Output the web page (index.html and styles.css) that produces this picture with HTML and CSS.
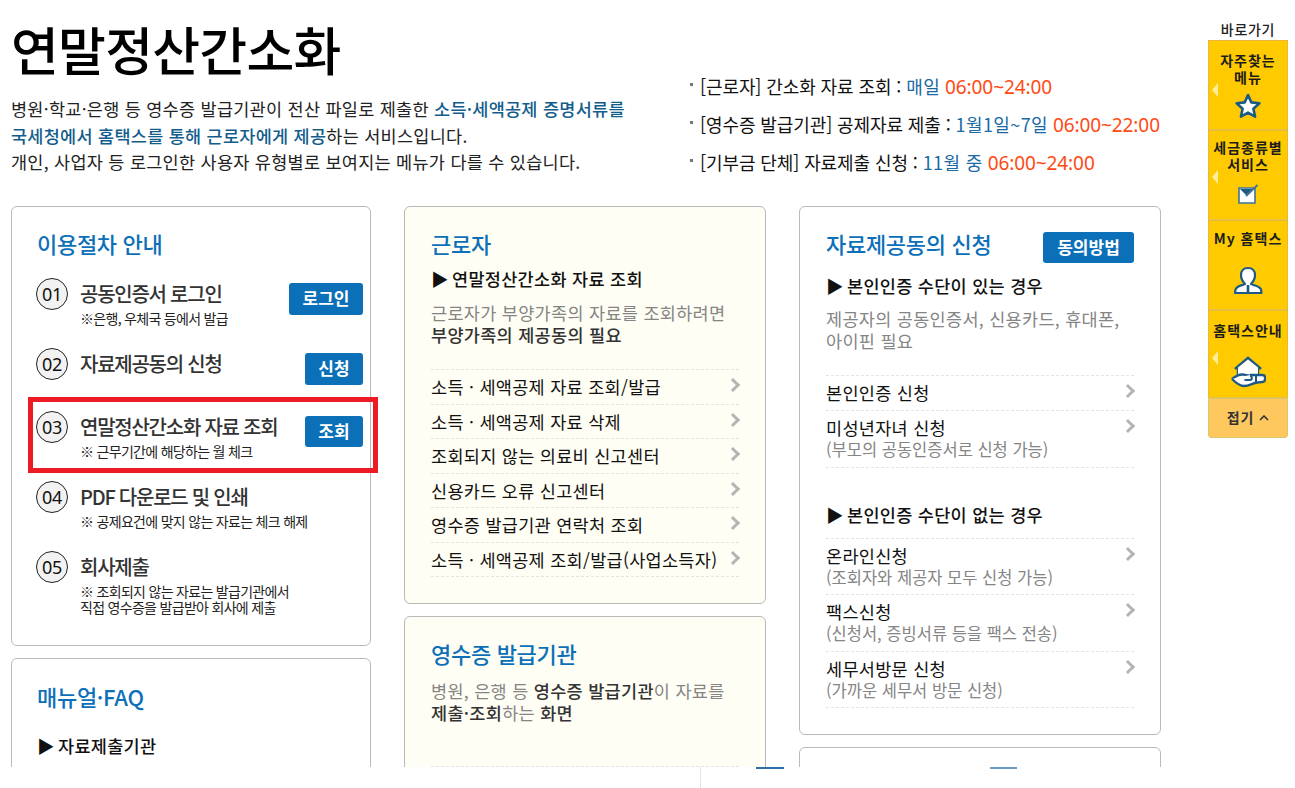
FILE: index.html
```html
<!DOCTYPE html>
<html lang="ko">
<head>
<meta charset="utf-8">
<title>연말정산간소화</title>
<link rel="stylesheet" href="styles.css">
</head>
<body>
<div class="page">
  <main class="main">
    <header class="head">
      <div class="intro">
        <h1>연말정산간소화</h1>
        <p>병원·학교·은행 등 영수증 발급기관이 전산 파일로 제출한 <b>소득·세액공제 증명서류를<br>국세청에서 홈택스를 통해 근로자에게 제공</b>하는 서비스입니다.<br>개인, 사업자 등 로그인한 사용자 유형별로 보여지는 메뉴가 다를 수 있습니다.</p>
      </div>
      <ul class="hours">
        <li>[근로자] 간소화 자료 조회 : <em>매일</em> <i>06:00~24:00</i></li>
        <li>[영수증 발급기관] 공제자료 제출 : <em>1월1일~7일</em> <i>06:00~22:00</i></li>
        <li>[기부금 단체] 자료제출 신청 : <em>11월 중</em> <i>06:00~24:00</i></li>
      </ul>
    </header>
    <div class="cols">
      <div class="col">
        <section class="card steps-card">
          <h2>이용절차 안내</h2>
          <div class="step s1"><span class="num">01</span><div class="txt"><strong>공동인증서 로그인</strong><small>※은행, 우체국 등에서 발급</small></div><a class="btn wide">로그인</a></div>
          <div class="step s2"><span class="num">02</span><div class="txt"><strong>자료제공동의 신청</strong></div><a class="btn">신청</a></div>
          <div class="step s3"><span class="num">03</span><div class="txt"><strong>연말정산간소화 자료 조회</strong><small>※ 근무기간에 해당하는 월 체크</small></div><a class="btn">조회</a></div>
          <div class="step s4"><span class="num">04</span><div class="txt"><strong>PDF 다운로드 및 인쇄</strong><small>※ 공제요건에 맞지 않는 자료는 체크 해제</small></div></div>
          <div class="step s5"><span class="num">05</span><div class="txt"><strong>회사제출</strong><small>※ 조회되지 않는 자료는 발급기관에서<br>직접 영수증을 발급받아 회사에 제출</small></div></div>
        </section>
        <section class="card faq">
          <h2>매뉴얼·FAQ</h2>
          <h3><span class="tri">▶</span> 자료제출기관</h3>
        </section>
      </div>
      <div class="col">
        <section class="card warm worker">
          <h2>근로자</h2>
          <h3><span class="tri">▶</span> 연말정산간소화 자료 조회</h3>
          <p class="desc">근로자가 부양가족의 자료를 조회하려면<br><b>부양가족의 제공동의 필요</b></p>
          <ul class="links">
            <li><a>소득 · 세액공제 자료 조회/발급</a></li>
            <li><a>소득 · 세액공제 자료 삭제</a></li>
            <li><a>조회되지 않는 의료비 신고센터</a></li>
            <li><a>신용카드 오류 신고센터</a></li>
            <li><a>영수증 발급기관 연락처 조회</a></li>
            <li><a>소득 · 세액공제 조회/발급(사업소득자)</a></li>
          </ul>
        </section>
        <section class="card warm issuer">
          <h2>영수증 발급기관</h2>
          <p class="desc">병원, 은행 등 <b>영수증 발급기관</b>이 자료를<br><b>제출·조회</b>하는 <b>화면</b></p>
          <div class="dash"></div>
        </section>
      </div>
      <div class="col">
        <section class="card consent">
          <div class="title-row"><h2>자료제공동의 신청</h2><a class="btn method">동의방법</a></div>
          <h3><span class="tri">▶</span> 본인인증 수단이 있는 경우</h3>
          <p class="desc">제공자의 공동인증서, 신용카드, 휴대폰,<br>아이핀 필요</p>
          <ul class="links tall first">
            <li><a>본인인증 신청</a></li>
            <li><a>미성년자녀 신청<small>(부모의 공동인증서로 신청 가능)</small></a></li>
          </ul>
          <h3 class="second"><span class="tri">▶</span> 본인인증 수단이 없는 경우</h3>
          <ul class="links tall">
            <li><a>온라인신청<small>(조회자와 제공자 모두 신청 가능)</small></a></li>
            <li><a>팩스신청<small>(신청서, 증빙서류 등을 팩스 전송)</small></a></li>
            <li><a>세무서방문 신청<small>(가까운 세무서 방문 신청)</small></a></li>
          </ul>
        </section>
        <section class="card last"></section>
      </div>
    </div>
  </main>
  <aside class="side">
    <div class="side-title">바로가기</div>
    <a class="qk q1"><span>자주찾는<br>메뉴</span>
      <svg width="28" height="28" viewBox="0 0 28 28"><path d="M14 3l3.300 7.400 8.100.9-6 5.400 1.700 8-7.100-4.100-7.100 4.100 1.700-8-6-5.400 8.100-.9z" fill="#fff" stroke="#1c5a85" stroke-width="2.600" stroke-linejoin="round"/></svg></a>
    <a class="qk q2"><span>세금종류별<br>서비스</span>
      <svg width="22" height="20" viewBox="0 0 22 20"><path d="M2 4h16v15H2z" fill="#fff" stroke="#3f7397" stroke-width="1.600"/><path d="M3 5h14l-7 7z" fill="#1c5a85"/><path d="M9 12L20.500 1" fill="none" stroke="#3f7397" stroke-width="1.800"/></svg></a>
    <a class="qk q3"><span>My 홈택스</span>
      <svg width="30" height="30" viewBox="0 0 30 30"><path d="M15 2c4.500 0 7 3 7 7s-3 8-4 9c3 1.500 9 2 10 5.500l.5 3.500H2l.5-3.500C3.500 20 9 19.500 12 18c-1-1-4-5-4-9s2.500-7 7-7z" fill="#fff" stroke="#1c5a85" stroke-width="2.200" stroke-linejoin="round"/><path d="M15 19v7" stroke="#1c5a85" stroke-width="2.600"/></svg></a>
    <a class="qk q4"><span>홈택스안내</span>
      <svg width="36" height="32" viewBox="0 0 36 32"><path d="M5 13L18 2l13 11" fill="none" stroke="#1c5a85" stroke-width="2.600"/><path d="M8 11.500V20M28 11.500V18" fill="none" stroke="#1c5a85" stroke-width="2.400"/><path d="M8 11.500L18 3.500l10 8V20H8z" fill="#fff"/><path d="M2 23c3-2.500 7-4.500 10.500-4.500 3 0 4 1 7 1 2.500 0 2.500 4 0 4H15" fill="#fff" stroke="#1c5a85" stroke-width="2.300" stroke-linejoin="round"/><path d="M2 23c3 3 7 7 12 7 5 0 9-3 13-3.500 2-.2 3-.5 5-.5 2.500 0 3-1.500 3-3v-1.500c0-2-1-2.500-3-2.500H20" fill="#fff" stroke="#1c5a85" stroke-width="2.300" stroke-linejoin="round"/><path d="M14.500 24H20c2.500 0 2.500-4 0-4M26 19v7" fill="none" stroke="#1c5a85" stroke-width="2"/></svg></a>
    <a class="fold">접기 <svg width="10" height="6" viewBox="0 0 10 6"><path d="M1 5l4-4 4 4" fill="none" stroke="#333" stroke-width="1.600"/></svg></a>
  </aside>
</div>
<footer class="foot"><span class="foot-line"></span><span class="foot-mark"></span><span class="foot-mark light"></span></footer>
</body>
</html>
```
FILE: styles.css
```css
*, *::before, *::after { box-sizing: border-box; }
html, body { margin: 0; padding: 0; height: 100%; overflow: hidden; background: #fff; }
body { font-family: "Noto Sans CJK KR", "Noto Sans", sans-serif; color: #222; }
a { display: block; }
ul { list-style: none; margin: 0; padding: 0; }
h1, h2, h3, p { margin: 0; font-weight: 400; }
.page { display: flex; height: 767px; overflow: hidden; }
.main { width: 1161px; margin-left: 11px; flex: none; }
.head { display: flex; height: 206px; }
.intro { width: 679px; padding-top: 12px; }
h1 { font-size: 52px; line-height: 74px; color: #000; letter-spacing: -0.75px; font-weight: 500; }
.intro p { margin-top: 10px; font-size: 17.5px; line-height: 26.500px; letter-spacing: 0.27px; color: #222; white-space: nowrap; }
.intro b { font-weight: 500; color: #135d8d; }
.hours { padding-top: 73px; font-size: 18px; line-height: 26px; letter-spacing: -0.1px; color: #111; }
.hours li { height: 38px; padding-left: 10px; position: relative; white-space: nowrap; }
.hours li::before { content: ""; position: absolute; left: 0; top: 10px; width: 3px; height: 3px; background: #777; }
.hours em { font-style: normal; color: #1a6aa5; letter-spacing: 0.4px; }
.hours i { font-style: normal; color: #ff4a14; font-family: "Noto Sans", sans-serif; font-size: 19px; letter-spacing: -0.1px; }
.cols { display: flex; gap: 33px; }
.col { width: 362px; flex: none; display: flex; flex-direction: column; gap: 12px; }
.col:first-child { width: 360px; }
.col:first-child h2, .col:first-child h3 { margin-left: -1px; }
.card { border: 1px solid #b9b9b9; border-radius: 6px; padding: 23px 26px 0; background: #fff; flex: none; }
.warm { background: #fffef4; }
h2 { font-size: 22px; line-height: 26px; color: #0c70b9; letter-spacing: -0.3px; font-weight: 500; }
.card h3 { font-size: 17.5px; line-height: 24px; font-weight: 500; color: #111; letter-spacing: 0.3px; white-space: nowrap; }
.tri { margin-right: -2px; }
.desc { font-size: 17.5px; line-height: 22px; color: #858585; letter-spacing: 0.3px; white-space: nowrap; }
.desc b { font-weight: 500; color: #333; }
.steps-card { height: 440px; }
.step { display: flex; align-items: flex-start; position: relative; }
.num { width: 32px; height: 32px; border: 1px solid #222; border-radius: 50%; background: #f2f2f2; font-family: "Noto Sans", sans-serif; font-size: 18px; line-height: 30px; text-align: center; color: #111; flex: none; margin-left: -2px; letter-spacing: -0.3px; }
.txt { margin-left: 12px; flex: 1; min-width: 0; padding-top: 3px; }
.txt strong { display: block; font-size: 20px; line-height: 26px; font-weight: 500; letter-spacing: -1.25px; color: #333; white-space: nowrap; }
.txt small { display: block; margin-top: 3px; font-size: 14px; line-height: 16px; letter-spacing: -0.7px; color: #222; white-space: nowrap; }
.btn { background: #0c70b9; color: #fff; font-size: 17px; font-weight: 700; height: 32px; line-height: 29px; border-radius: 3px; text-align: center; width: 58px; flex: none; margin: 5px -19px 0 0; }
.btn.wide { width: 74px; }
.s1 { margin-top: 22px; height: 70px; }
.s2 { height: 63px; }
.s3 { height: 70px; }
.s3::after { content: ""; position: absolute; left: -10px; right: -34px; top: -14px; height: 76px; border: 5px solid #ed1c24; pointer-events: none; }
.s3 .btn { height: 31px; }
.s4 { height: 70px; }
.s5 { height: 80px; }
.faq { height: 200px; }
.faq h2 { margin-top: 1px; }
.faq h3 { margin-top: 25px; }
.worker { height: 398px; }
.worker h3 { margin-top: 11px; }
.worker .desc { margin-top: 11px; }
.links { margin-top: 23px; border-top: 1px dashed #e4e4e4; }
.links li { border-bottom: 1px dashed #e4e4e4; font-size: 17.5px; color: #111; line-height: 33.500px; position: relative; letter-spacing: 0.3px; white-space: nowrap; }
.links li::after { content: ""; position: absolute; right: 1px; top: 10px; width: 10px; height: 10px; border-top: 3px solid #b4b4b4; border-right: 3px solid #b4b4b4; transform: rotate(45deg); }
.issuer { height: 200px; }
.issuer .desc { margin-top: 14px; }
.dash { margin-top: 42px; border-top: 1px dashed #e4e4e4; }
.consent { height: 529px; }
.title-row { display: flex; justify-content: space-between; align-items: flex-start; }
.btn.method { width: 91px; margin: 2px 0 0; height: 31px; }
.consent h3 { margin-top: 11px; }
.consent .desc { margin-top: 10px; }
.tall li { line-height: 24px; padding: 5px 0; }
.tall small { display: block; font-size: 16.5px; line-height: 20px; color: #858585; margin: -1px 0 2.600px; letter-spacing: 0; }
.first { margin-top: 23px; }
.consent h3.second { margin-top: 35px; }
.second + .links { margin-top: 11px; }
.last { height: 60px; }
.side { width: 80px; margin-left: 36px; flex: none; padding-top: 19px; }
.side-title { font-size: 14px; line-height: 21px; text-align: center; color: #222; font-weight: 500; letter-spacing: 0.7px; }
.qk { height: 90px; background: #ffcb00; border: 1px solid #e9b73a; border-bottom-color: #e6c24a; text-align: center; position: relative; color: #1d1d1d; font-size: 14px; line-height: 17px; font-weight: 700; letter-spacing: 1px; white-space: nowrap; }
.qk span { display: block; }
.qk svg { position: absolute; left: 50%; transform: translateX(-50%); }
.q1 { padding-top: 11px; }
.q2 { padding-top: 8px; }
.q3 { padding-top: 9px; }
.q4 { padding-top: 11px; height: 88px; }
.q1 svg { bottom: 9px; }
.q2 svg { bottom: 15px; }
.q3 svg { bottom: 13px; }
.q4 svg { bottom: 9px; }
.q1::before, .q2::before, .q4::before { content: ""; position: absolute; left: 3px; border: 7px solid transparent; border-left: 0; border-right: 6px solid #ffee9a; }
.q1::before { top: 42px; }
.q2::before { top: 39px; }
.q4::before { top: 40px; }
.fold { height: 40px; background: #ffc85f; border: 1px solid #d9c86b; border-radius: 0 0 3px 3px; text-align: center; font-size: 14px; line-height: 36px; font-weight: 700; color: #333; letter-spacing: 1px; }
.fold svg { vertical-align: 2px; }
.foot { height: 21px; display: flex; align-items: flex-start; }
.foot-line { width: 1px; height: 21px; background: #e3e3e3; margin-left: 700px; }
.foot-mark { width: 28px; height: 2px; background: #2f6ea5; margin-left: 55px; }
.foot-mark.light { width: 27px; background: #6a9cc4; margin-left: 206px; }
```
